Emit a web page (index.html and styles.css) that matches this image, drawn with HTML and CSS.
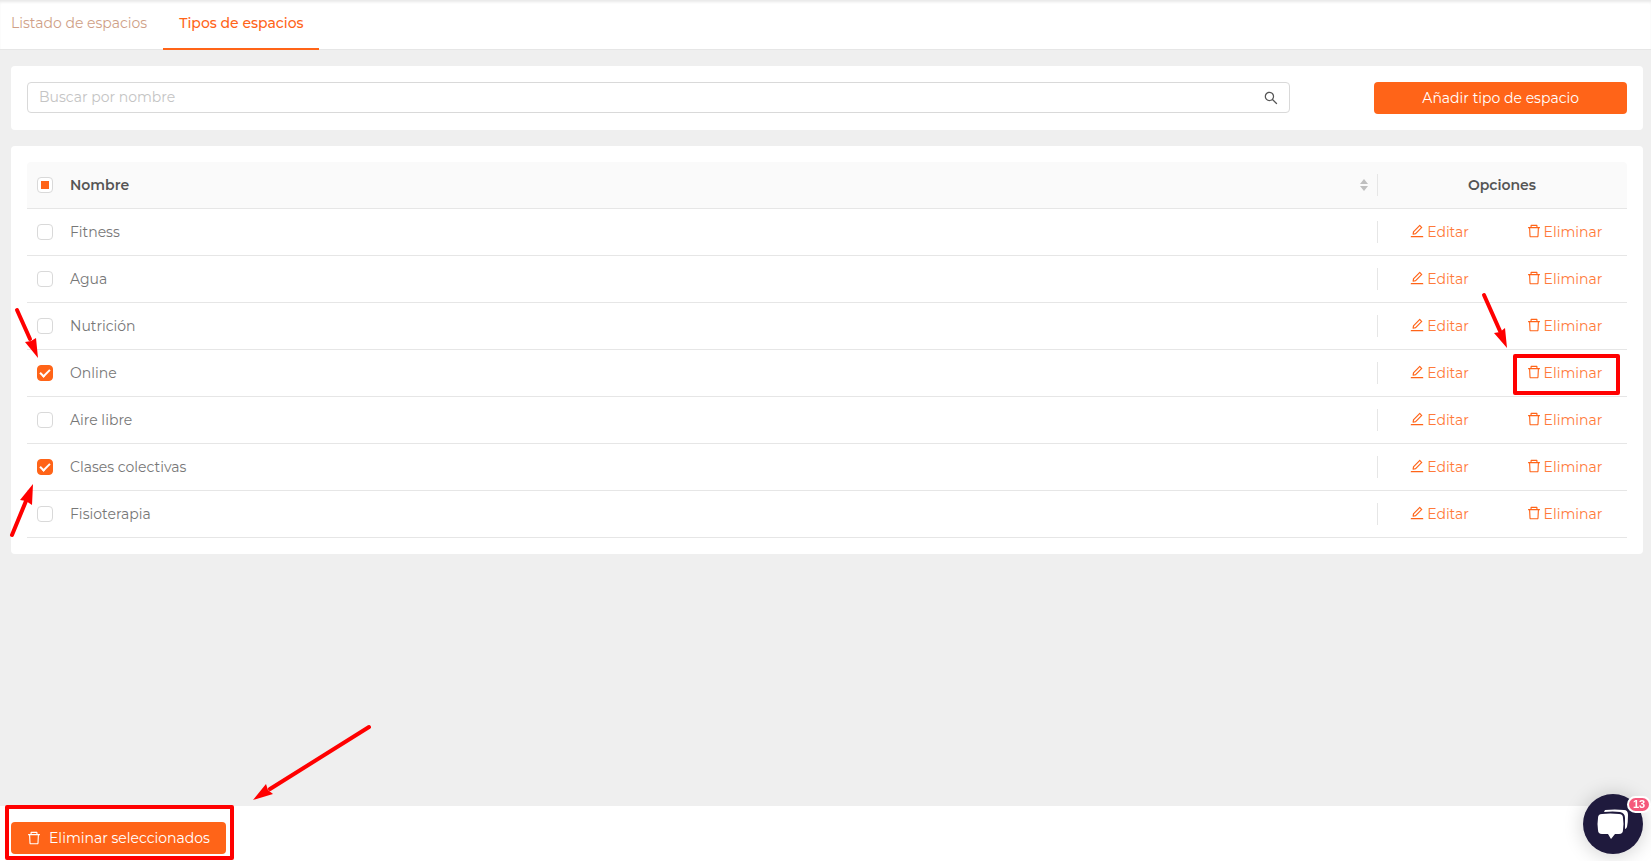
FILE: index.html
```html
<!DOCTYPE html>
<html lang="es">

<head>
    <meta charset="UTF-8">
    <meta name="viewport" content="width=device-width, initial-scale=1.0">
    <title>Tipos de espacios</title>
    <link rel="stylesheet" href="styles.css">
</head>

<body>
    <!-- Iconos -->
    <svg class="sprite" aria-hidden="true">
        <symbol id="icon-edit" viewBox="64 64 896 896">
            <path d="M257.7 752c2 0 4-.2 6-.5L431.9 722c2-.4 3.9-1.3 5.3-2.8l423.9-423.9a9.96 9.96 0 000-14.1L694.9 114.9c-1.9-1.9-4.4-2.9-7.1-2.9s-5.2 1-7.1 2.9L256.8 538.8c-1.5 1.5-2.4 3.3-2.8 5.3l-29.5 168.2a33.5 33.5 0 009.4 29.8c6.6 6.4 14.9 9.9 23.8 9.9zm67.4-174.4L687.8 215l73.3 73.3-362.7 362.6-88.9 15.7 15.6-89zM880 836H144c-17.7 0-32 14.3-32 32v36c0 4.4 3.6 8 8 8h784c4.4 0 8-3.6 8-8v-36c0-17.7-14.3-32-32-32z"/>
        </symbol>
        <symbol id="icon-delete" viewBox="64 64 896 896">
            <path d="M360 184h-8c4.4 0 8-3.6 8-8v8h304v-8c0 4.4 3.6 8 8 8h-8v72h72v-80c0-35.3-28.7-64-64-64H352c-35.3 0-64 28.7-64 64v80h72v-72zm504 72H160c-17.7 0-32 14.3-32 32v32c0 4.4 3.6 8 8 8h60.4l24.7 523c1.6 34.1 29.8 61 63.9 61h454c34.2 0 62.3-26.8 63.9-61l24.7-523H888c4.4 0 8-3.6 8-8v-32c0-17.7-14.3-32-32-32zM731.3 840H292.7l-24.2-512h487l-24.2 512z"/>
        </symbol>
        <symbol id="icon-search" viewBox="64 64 896 896">
            <path d="M909.6 854.5L649.9 594.8C690.2 542.7 712 479 712 412c0-80.2-31.3-155.4-87.9-212.1-56.6-56.7-132-87.9-212.1-87.9s-155.5 31.3-212.1 87.9C143.2 256.5 112 331.8 112 412c0 80.1 31.3 155.5 87.9 212.1C256.5 680.8 331.8 712 412 712c67 0 130.6-21.8 182.7-62l259.7 259.6a8.2 8.2 0 0011.6 0l43.6-43.5a8.2 8.2 0 000-11.6zM570.4 570.4C528 612.7 471.8 636 412 636s-116-23.3-158.4-65.6C211.3 528 188 471.8 188 412s23.3-116.1 65.6-158.4C296 211.3 352.2 188 412 188s116.1 23.2 158.4 65.6S636 352.2 636 412s-23.3 116.1-65.6 158.4z"/>
        </symbol>
    </svg>

    <nav class="tabs">
        <a href="#listado" class="tab">Listado de espacios</a>
        <a href="#tipos" class="tab active">Tipos de espacios</a>
    </nav>

    <main class="content">
        <!-- Buscador -->
        <section class="card toolbar">
            <div class="search">
                <input type="text" class="search-input" placeholder="Buscar por nombre" aria-label="Buscar por nombre">
                <button type="button" class="search-btn" aria-label="Buscar">
                    <svg class="icon"><use href="#icon-search"/></svg>
                </button>
            </div>
            <button type="button" class="btn">Añadir tipo de espacio</button>
        </section>

        <!-- Tabla de tipos -->
        <section class="card">
            <table class="types-table">
                <thead>
                    <tr>
                        <th class="col-check"><input type="checkbox" class="checkbox" id="check-all" aria-label="Seleccionar todos"></th>
                        <th class="col-name">
                            <button type="button" class="sort-btn">
                                Nombre
                                <svg class="sorter" viewBox="0 0 8 12" aria-hidden="true"><path d="M4 0l4 5H0zM4 12L0 7h8z"/></svg>
                            </button>
                        </th>
                        <th class="col-options">Opciones</th>
                    </tr>
                </thead>
                <tbody>
                    <tr>
                        <td><input type="checkbox" class="checkbox" id="type-1"></td>
                        <td><label for="type-1">Fitness</label></td>
                        <td class="col-options">
                            <div class="options">
                                <a href="#editar"><svg class="icon"><use href="#icon-edit"/></svg>Editar</a>
                                <a href="#eliminar"><svg class="icon"><use href="#icon-delete"/></svg>Eliminar</a>
                            </div>
                        </td>
                    </tr>
                    <tr>
                        <td><input type="checkbox" class="checkbox" id="type-2"></td>
                        <td><label for="type-2">Agua</label></td>
                        <td class="col-options">
                            <div class="options">
                                <a href="#editar"><svg class="icon"><use href="#icon-edit"/></svg>Editar</a>
                                <a href="#eliminar"><svg class="icon"><use href="#icon-delete"/></svg>Eliminar</a>
                            </div>
                        </td>
                    </tr>
                    <tr>
                        <td><input type="checkbox" class="checkbox" id="type-3"></td>
                        <td><label for="type-3">Nutrición</label></td>
                        <td class="col-options">
                            <div class="options">
                                <a href="#editar"><svg class="icon"><use href="#icon-edit"/></svg>Editar</a>
                                <a href="#eliminar"><svg class="icon"><use href="#icon-delete"/></svg>Eliminar</a>
                            </div>
                        </td>
                    </tr>
                    <tr>
                        <td>
                            <input type="checkbox" class="checkbox" id="type-4" checked>
                            <svg class="arrow arrow-online" viewBox="0 0 30 54" aria-hidden="true"><path class="line" d="M5 5l13 29"/><path class="head" d="M26 53L13 37l6-1 5-3z"/></svg>
                        </td>
                        <td><label for="type-4">Online</label></td>
                        <td class="col-options">
                            <div class="options">
                                <a href="#editar"><svg class="icon"><use href="#icon-edit"/></svg>Editar</a>
                                <a href="#eliminar"><svg class="icon"><use href="#icon-delete"/></svg>Eliminar</a>
                            </div>
                            <span class="mark mark-delete"></span>
                            <svg class="arrow arrow-delete" viewBox="0 0 32 60" aria-hidden="true"><path class="line" d="M5 5l16 36"/><path class="head" d="M28 58L15 43l6-1 5-4z"/></svg>
                        </td>
                    </tr>
                    <tr>
                        <td><input type="checkbox" class="checkbox" id="type-5"></td>
                        <td><label for="type-5">Aire libre</label></td>
                        <td class="col-options">
                            <div class="options">
                                <a href="#editar"><svg class="icon"><use href="#icon-edit"/></svg>Editar</a>
                                <a href="#eliminar"><svg class="icon"><use href="#icon-delete"/></svg>Eliminar</a>
                            </div>
                        </td>
                    </tr>
                    <tr>
                        <td>
                            <input type="checkbox" class="checkbox" id="type-6" checked>
                            <svg class="arrow arrow-classes" viewBox="0 0 30 58" aria-hidden="true"><path class="line" d="M5 54l14-34"/><path class="head" d="M26 3l-1 21-6-4-6-1z"/></svg>
                        </td>
                        <td><label for="type-6">Clases colectivas</label></td>
                        <td class="col-options">
                            <div class="options">
                                <a href="#editar"><svg class="icon"><use href="#icon-edit"/></svg>Editar</a>
                                <a href="#eliminar"><svg class="icon"><use href="#icon-delete"/></svg>Eliminar</a>
                            </div>
                        </td>
                    </tr>
                    <tr>
                        <td><input type="checkbox" class="checkbox" id="type-7"></td>
                        <td><label for="type-7">Fisioterapia</label></td>
                        <td class="col-options">
                            <div class="options">
                                <a href="#editar"><svg class="icon"><use href="#icon-edit"/></svg>Editar</a>
                                <a href="#eliminar"><svg class="icon"><use href="#icon-delete"/></svg>Eliminar</a>
                            </div>
                        </td>
                    </tr>
                </tbody>
            </table>
        </section>
    </main>

    <!-- Acciones sobre la selección -->
    <footer class="footer">
        <button type="button" class="btn btn-delete"><svg class="icon"><use href="#icon-delete"/></svg>Eliminar seleccionados</button>
        <span class="mark mark-footer"></span>
        <svg class="arrow arrow-footer" viewBox="0 0 124 82" aria-hidden="true"><path class="line" d="M119 5L20 67"/><path class="head" d="M3 78l13-16 2 6 5 4z"/></svg>
    </footer>

    <!-- Chat -->
    <button type="button" class="chat" aria-label="Abrir chat">
        <svg class="chat-icon" viewBox="0 0 32 32" aria-hidden="true">
            <path d="M8 2Q18 1 27 2Q31 2 31 7Q31 14 30 19Q29 21 28 21V10Q28 5 23 4Q16 3 7 4Z"/>
            <path d="M5 6Q13 5 22 6Q26 6 26 10Q27 16 26 22Q26 26 22 26H18L14 31L11 26H5Q1 26 1 22Q0 16 1 10Q1 6 5 6Z"/>
        </svg>
        <span class="badge">13</span>
    </button>

    <script>
        const checkAll = document.getElementById('check-all');
        const checks = document.querySelectorAll('tbody .checkbox');

        function updateCheckAll() {
            const total = document.querySelectorAll('tbody .checkbox:checked').length;
            checkAll.checked = total === checks.length;
            checkAll.indeterminate = total > 0 && total < checks.length;
        }

        checkAll.addEventListener('change', () => {
            checks.forEach(check => check.checked = checkAll.checked);
        });
        checks.forEach(check => check.addEventListener('change', updateCheckAll));
        updateCheckAll();
    </script>
</body>

</html>
```
FILE: styles.css
```css
*,
*::before,
*::after {
    box-sizing: border-box;
}

body {
    display: flex;
    flex-direction: column;
    min-height: 100vh;
    margin: 0;
    background-color: #efefef;
    color: #777;
    font-family: Montserrat, Inter, sans-serif;
    font-size: 14px;
    font-weight: 400;
    line-height: 22px;
}

a {
    color: #ff6418;
    text-decoration: none;
}

button,
input {
    font: inherit;
}

.sprite {
    display: none;
}

.icon {
    width: 14px;
    height: 14px;
    fill: currentColor;
}

/* Pestañas */
.tabs {
    display: flex;
    gap: 16px;
    padding-left: 11px;
    background-color: #fff;
    border-bottom: 1px solid #e6e6e6;
    box-shadow: inset 0 3px 3px -1px #e8e8e8;
}

.tab {
    height: 49px;
    padding-top: 12px;
    color: #cf9f87;
}

.tab.active {
    height: 50px;
    margin-bottom: -1px;
    padding: 12px 15px 0 16px;
    border-bottom: 2px solid #ff6418;
    color: #ff6418;
    font-weight: 500;
}

/* Contenido */
.content {
    display: flex;
    flex: 1;
    flex-direction: column;
    gap: 16px;
    padding: 16px 8px 16px 11px;
}

.card {
    padding: 16px;
    background-color: #fff;
    border-radius: 4px;
}

.toolbar {
    display: grid;
    grid-template-columns: 15fr 3fr;
    column-gap: 84px;
}

.search {
    display: flex;
    height: 31px;
    border: 1px solid #d9d9d9;
    border-radius: 4px;
}

.search-input {
    flex: 1;
    min-width: 0;
    padding: 0 11px 2px;
    background: none;
    border: none;
    color: #777;
    outline: none;
}

.search-input::placeholder {
    color: #c4c4c4;
}

.search-btn {
    display: flex;
    align-items: center;
    padding: 0 11px;
    background: none;
    border: none;
    color: #555;
    cursor: pointer;
}

.btn {
    height: 32px;
    padding: 0 16px;
    background-color: #ff6418;
    border: none;
    border-radius: 4px;
    color: #fff;
    cursor: pointer;
}

/* Tabla */
.types-table {
    width: 100%;
    border-collapse: separate;
    border-spacing: 0;
    table-layout: fixed;
}

.types-table th,
.types-table td {
    position: relative;
    height: 47px;
    padding: 0;
    border-bottom: 1px solid #e6e6e6;
    text-align: left;
}

.types-table th {
    background-color: #fafafa;
    color: #555;
    font-weight: 600;
}

.types-table th:first-child {
    border-top-left-radius: 4px;
}

.types-table th:last-child {
    border-top-right-radius: 4px;
}

.types-table .col-check {
    width: 43px;
}

.types-table .col-options {
    width: 250px;
    text-align: center;
}

.col-options::before {
    content: "";
    position: absolute;
    top: 12px;
    left: 0;
    width: 1px;
    height: 22px;
    background-color: #e6e6e6;
}

.sort-btn {
    display: flex;
    justify-content: space-between;
    align-items: center;
    width: 100%;
    padding: 0 9px 0 0;
    background: none;
    border: none;
    color: inherit;
    cursor: pointer;
}

.sorter {
    width: 8px;
    height: 12px;
    fill: #bfbfbf;
}

.options {
    display: grid;
    grid-template-columns: 1fr 1fr;
}

.options a {
    display: flex;
    justify-content: center;
    align-items: center;
    gap: 3px;
    color: #ff7a3a;
}

.options .icon {
    margin-bottom: 2px;
    fill: #ff6418;
}

.checkbox {
    display: block;
    position: relative;
    width: 16px;
    height: 16px;
    margin: 0 0 0 10px;
    appearance: none;
    background-color: #fff;
    border: 1px solid #d9d9d9;
    border-radius: 4px;
    cursor: pointer;
}

.checkbox:indeterminate::after {
    content: "";
    position: absolute;
    top: 3px;
    left: 3px;
    width: 8px;
    height: 8px;
    background-color: #ff6418;
}

.checkbox:checked {
    background-color: #ff6418;
    border-color: #ff6418;
}

.checkbox:checked::after {
    content: "";
    position: absolute;
    top: 1px;
    left: 4px;
    width: 6px;
    height: 10px;
    border: solid #fff;
    border-width: 0 2px 2px 0;
    transform: rotate(45deg);
}

/* Pie */
.footer {
    position: relative;
    padding: 16px 11px 7px;
    background-color: #fff;
}

.btn-delete {
    display: flex;
    align-items: center;
    gap: 8px;
}

/* Marcas y flechas rojas */
.mark {
    position: absolute;
    border: 4px solid #f00;
    border-radius: 2px;
    pointer-events: none;
}

.mark-delete {
    top: 4px;
    right: 7px;
    width: 107px;
    height: 41px;
}

.mark-footer {
    top: -1px;
    left: 5px;
    width: 229px;
    height: 55px;
}

.arrow {
    position: absolute;
    z-index: 1;
    pointer-events: none;
}

.arrow .line {
    fill: none;
    stroke: #f00;
    stroke-width: 4;
    stroke-linecap: round;
}

.arrow .head {
    fill: #f00;
}

.arrow-online {
    top: -45px;
    left: -15px;
    width: 30px;
    height: 54px;
}

.arrow-classes {
    top: 37px;
    left: -20px;
    width: 30px;
    height: 58px;
}

.arrow-delete {
    top: -60px;
    left: 102px;
    width: 32px;
    height: 60px;
}

.arrow-footer {
    top: -84px;
    left: 250px;
    width: 124px;
    height: 82px;
}

/* Chat */
.chat {
    display: flex;
    justify-content: center;
    align-items: center;
    position: fixed;
    right: 8px;
    bottom: 7px;
    width: 60px;
    height: 60px;
    padding: 0;
    background-color: #1f1a3d;
    border: none;
    border-radius: 50%;
    box-shadow: 0 1px 20px rgba(0, 0, 0, 0.2);
    cursor: pointer;
}

.chat-icon {
    width: 32px;
    height: 32px;
    fill: #fff;
}

.badge {
    position: absolute;
    top: 2px;
    right: -8px;
    width: 24px;
    height: 17px;
    border: 2px solid #fff;
    border-radius: 9px;
    background-color: #f5587b;
    color: #fff;
    font-family: "Liberation Sans", sans-serif;
    font-size: 11px;
    font-weight: 700;
    line-height: 13px;
    text-align: center;
}
```
